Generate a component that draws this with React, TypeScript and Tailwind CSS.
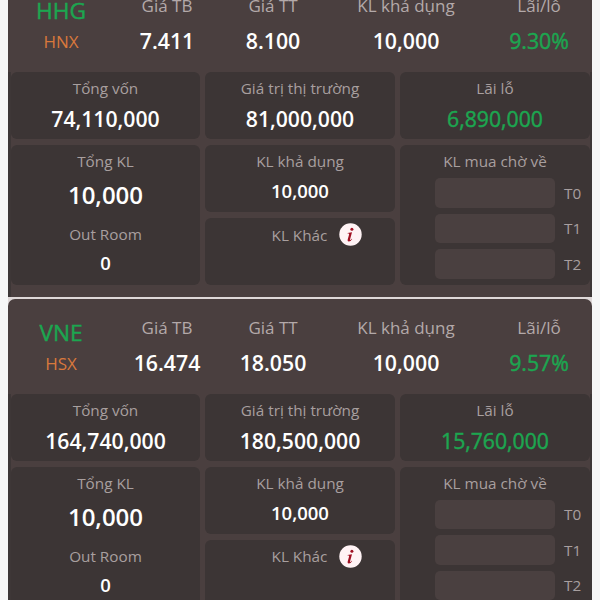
type Stock = {
  code: string;
  market: string;
  avg: string;
  price: string;
  available: string;
  rate: string;
  cost: string;
  value: string;
  profit: string;
};

const stocks: Stock[] = [
  { code: "HHG", market: "HNX", avg: "7.411", price: "8.100", available: "10,000", rate: "9.30%", cost: "74,110,000", value: "81,000,000", profit: "6,890,000" },
  { code: "VNE", market: "HSX", avg: "16.474", price: "18.050", available: "10,000", rate: "9.57%", cost: "164,740,000", value: "180,500,000", profit: "15,760,000" },
];

const panel = "rounded-md bg-[#3c3535] flex flex-col items-center";
const label = "text-[15.3px] leading-5 text-[#a89f9f]";
const positive = "text-[#1ca650] [-webkit-text-stroke:0.45px_#1ca650]";

function HeaderCell({ title, value, green }: { title: string; value: string; green?: boolean }) {
  return (
    <div className="flex flex-col items-center">
      <div className="text-[17px] leading-6 text-[#b3a9a9]">{title}</div>
      <div className={`mt-[11px] text-[21.3px] leading-6 ${green ? positive : "font-semibold text-white"}`}>{value}</div>
    </div>
  );
}

function Total({ title, value, green }: { title: string; value: string; green?: boolean }) {
  return (
    <div className={`${panel} h-[67px] pt-[6px]`}>
      <div className={label}>{title}</div>
      <div className={`mt-[9px] text-[21.2px] leading-6 ${green ? positive : "font-semibold text-white"}`}>{value}</div>
    </div>
  );
}

function InfoIcon() {
  return (
    <svg width="23" height="23" viewBox="0 0 23 23" className="shrink-0">
      <circle cx="11.5" cy="11.5" r="11.2" fill="#fff3f5" />
      <circle cx="12.9" cy="6.2" r="1.5" fill="#a01022" />
      <path d="M8.6 9.9 13 9.3 11.1 16.2q-.3 1.1.4.7.6-.4 1.2-1.2l.5.4q-1.8 2.7-3.5 2.5-1.5-.2-1-2.1l1.4-5q.3-1-.6-1.1h-.9Z" fill="#a01022" />
    </svg>
  );
}

function Card({ stock }: { stock: Stock }) {
  return (
    <section className="h-[320px] shrink-0 overflow-hidden rounded-t-[7px] bg-[#4a3f3f]">
      <div className="grid h-[95px] grid-cols-[106px_106px_106px_160px_106px] pt-[17px]">
        <div className="flex flex-col items-center pt-[3px]">
          <div className={`text-[22.7px] leading-7 ${positive}`}>{stock.code}</div>
          <div className="mt-[5px] text-[17px] leading-6 text-[#d8783c]">{stock.market}</div>
        </div>
        <HeaderCell title="Giá TB" value={stock.avg} />
        <HeaderCell title="Giá TT" value={stock.price} />
        <HeaderCell title="KL khả dụng" value={stock.available} />
        <HeaderCell title="Lãi/lỗ" value={stock.rate} green />
      </div>
      <div className="h-[225px] border-l-[3px] border-r-2 border-[#3e3737]">
        <div className="grid grid-cols-[189px_190px_190px] gap-x-[5px] gap-y-[6px]">
          <Total title="Tổng vốn" value={stock.cost} />
          <Total title="Giá trị thị trường" value={stock.value} />
          <Total title="Lãi lỗ" value={stock.profit} green />
          <div className={`${panel} h-[140px] pt-[6px] text-white`}>
            <div className={label}>Tổng KL</div>
            <div className="mt-[10px] text-2xl leading-7 font-semibold">10,000</div>
            <div className={`mt-[15px] ${label}`}>Out Room</div>
            <div className="mt-[7px] text-[18.5px] leading-6 font-semibold">0</div>
          </div>
          <div className="flex flex-col gap-[6px]">
            <div className={`${panel} h-[67px] pt-[6px]`}>
              <div className={label}>KL khả dụng</div>
              <div className="mt-2 text-[18.5px] leading-6 font-semibold text-white">10,000</div>
            </div>
            <div className={`${panel} h-[67px] pt-[5px]`}>
              <div className="flex items-center gap-3 pl-[34px]">
                <div className={label}>KL Khác</div>
                <InfoIcon />
              </div>
            </div>
          </div>
          <div className={`${panel} h-[140px] pt-[6px]`}>
            <div className={label}>KL mua chờ về</div>
            <div className="mt-[7px] flex flex-col gap-[6px] self-stretch pl-[35px]">
              {["T0", "T1", "T2"].map((t) => (
                <div key={t} className="flex h-[29.5px] items-center">
                  <div className="h-full w-[120px] rounded-[5px] bg-[#4a4040]" />
                  <div className={`ml-[9px] ${label}`}>{t}</div>
                </div>
              ))}
            </div>
          </div>
        </div>
      </div>
    </section>
  );
}

export default function App() {
  return (
    <main className="flex h-[600px] w-[600px] flex-col overflow-hidden bg-[#f7f7f7] px-2 font-['Open_Sans','Noto_Sans',sans-serif]">
      <div className="-mt-[23px] flex flex-col gap-[1.5px] bg-[#dfd8d8]">
        {stocks.map((stock) => (
          <Card key={stock.code} stock={stock} />
        ))}
      </div>
    </main>
  );
}
